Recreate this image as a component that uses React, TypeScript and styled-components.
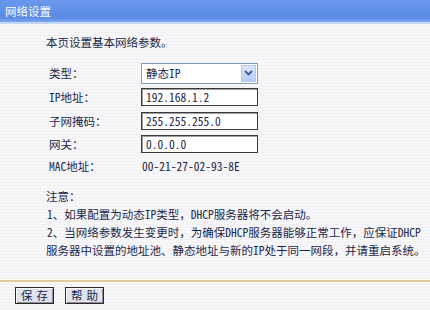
import React from 'react';
import styled, { createGlobalStyle } from 'styled-components';

const GlobalStyle = createGlobalStyle`
  html, body {
    margin: 0;
    padding: 0;
    background: #f6f6f8;
  }
  body {
    font-family: "Noto Sans Mono CJK SC", "Noto Sans CJK SC", sans-serif;
    font-size: 11.5px;
    color: #1c2748;
  }
`;

const Page = styled.div`
  width: 430px;
  height: 310px;
  overflow: hidden;
  display: flex;
  flex-direction: column;
  background: repeating-linear-gradient(180deg, #f7f7f9 0 2px, #f1f1f4 2px 3px);
`;

const TitleBar = styled.div`
  height: 22px;
  display: flex;
  align-items: center;
  padding-left: 5px;
  background: linear-gradient(180deg, #6a98ec 0%, #5a8ae6 80%, #7fa6ee 100%);
  border-bottom: 2px solid #c4d6f5;
  color: #ffffff;
  font-size: 11.5px;
`;

const Body = styled.div`
  flex: 1;
  padding-left: 46px;
  display: flex;
  flex-direction: column;
`;

const Intro = styled.div`
  margin-top: 10px;
  line-height: 16px;
`;

const Form = styled.div`
  margin-top: 11px;
  display: flex;
  flex-direction: column;
`;

const Row = styled.div<{ $h: number }>`
  height: ${(p) => p.$h}px;
  display: grid;
  grid-template-columns: 92px 117px;
  align-items: center;
  padding-left: 3px;
`;

const Label = styled.span`
  white-space: nowrap;
`;

const SelectBox = styled.div`
  height: 21px;
  box-sizing: border-box;
  border: 1px solid #7f9db9;
  background: #fff;
  display: flex;
  align-items: center;
  justify-content: space-between;
  padding: 1px 1px 1px 4px;
`;

const ArrowButton = styled.span`
  width: 15px;
  height: 17px;
  background: linear-gradient(180deg, #dbe6fd 0%, #b9cdf7 100%);
  border: 1px solid #b4c8f2;
  box-sizing: border-box;
  display: flex;
  align-items: center;
  justify-content: center;
`;

const TextBox = styled.div`
  height: 18px;
  box-sizing: border-box;
  border: 1px solid #3a3a3a;
  box-shadow: inset 1px 1px 0 #a0a0a0;
  background: #fff;
  display: flex;
  align-items: center;
  padding-left: 4px;
`;

const Value = styled.span`
  padding-left: 1px;
`;

const Notes = styled.div`
  margin-top: 10px;
  line-height: 18px;
  white-space: nowrap;
`;

const NoteLine = styled.div<{ $indent?: number }>`
  padding-left: ${(p) => p.$indent ?? 0}px;
`;

const Footer = styled.div`
  margin-top: auto;
  border-top: 2px solid #e3c99d;
  box-shadow: 0 -1px 0 #fffaf0;
  height: 26px;
  display: flex;
  align-items: center;
  gap: 11px;
  padding-left: 15px;
  padding-bottom: 2px;
`;

const Button = styled.button`
  width: 39px;
  height: 17px;
  padding: 0;
  box-sizing: border-box;
  border: 1px solid #2a2a2a;
  box-shadow: inset 1px 1px 0 #ffffff, inset -1px -1px 0 #8c8c96;
  background: #dfe3ee;
  color: #1c2748;
  font-family: "Noto Sans CJK SC", sans-serif;
  font-size: 11.5px;
  letter-spacing: 4px;
  text-indent: 4px;
  line-height: 14px;
`;

const Chevron = () => (
  <svg width="9" height="6" viewBox="0 0 9 6">
    <path d="M1 1 L4.5 4.5 L8 1" fill="none" stroke="#3e5a99" strokeWidth="1.8" />
  </svg>
);

const App: React.FC = () => {
  return (
    <>
      <GlobalStyle />
      <Page>
        <TitleBar>网络设置</TitleBar>
        <Body>
          <Intro>本页设置基本网络参数。</Intro>
          <Form>
            <Row $h={24}>
              <Label>类型：</Label>
              <SelectBox>
                <span>静态IP</span>
                <ArrowButton>
                  <Chevron />
                </ArrowButton>
              </SelectBox>
            </Row>
            <Row $h={24}>
              <Label>IP地址：</Label>
              <TextBox>192.168.1.2</TextBox>
            </Row>
            <Row $h={24}>
              <Label>子网掩码：</Label>
              <TextBox>255.255.255.0</TextBox>
            </Row>
            <Row $h={22}>
              <Label>网关：</Label>
              <TextBox>0.0.0.0</TextBox>
            </Row>
            <Row $h={22}>
              <Label>MAC地址：</Label>
              <Value>00-21-27-02-93-8E</Value>
            </Row>
          </Form>
          <Notes>
            <NoteLine>注意：</NoteLine>
            <NoteLine $indent={1}>1、如果配置为动态IP类型，DHCP服务器将不会启动。</NoteLine>
            <NoteLine $indent={1}>2、当网络参数发生变更时，为确保DHCP服务器能够正常工作，应保证DHCP</NoteLine>
            <NoteLine>服务器中设置的地址池、静态地址与新的IP处于同一网段，并请重启系统。</NoteLine>
          </Notes>
        </Body>
        <Footer>
          <Button>保存</Button>
          <Button>帮助</Button>
        </Footer>
      </Page>
    </>
  );
};

export default App;
